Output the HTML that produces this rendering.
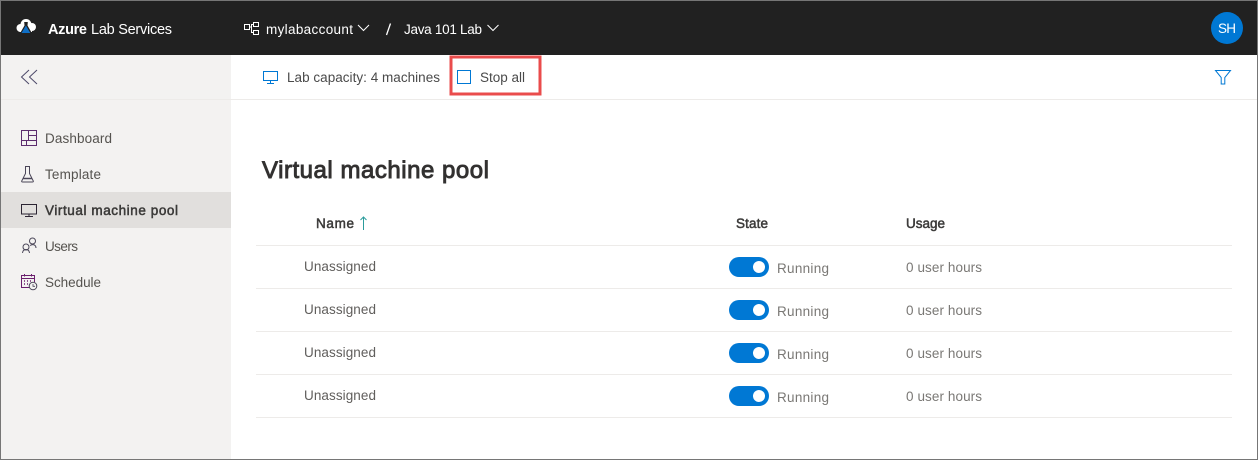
<!DOCTYPE html>
<html>
<head>
<meta charset="utf-8">
<style>
html,body{margin:0;padding:0;width:1258px;height:460px;overflow:hidden;background:#fff}
svg{display:block}
text{font-family:"Liberation Sans",sans-serif}
.semi{stroke:#3b3a39;stroke-width:.5px}
</style>
</head>
<body>
<svg width="1258" height="460" viewBox="0 0 1258 460" xmlns="http://www.w3.org/2000/svg">
<rect width="1258" height="460" fill="#fff"/>
<rect x="1" y="1" width="230" height="458" fill="#f3f2f1"/>
<rect x="1" y="192" width="230" height="36" fill="#e1dfdd"/>
<rect x="1" y="1" width="1256" height="54" fill="#212121"/>
<rect x="1" y="99" width="230" height="1" fill="#edebe9"/>
<rect x="231" y="99" width="1026" height="1" fill="#edebe9"/>

<!-- logo -->
<g>
<circle cx="20.500" cy="28" r="4" fill="#fff"/>
<circle cx="26" cy="24.500" r="5.500" fill="#fff"/>
<circle cx="32" cy="27" r="4" fill="#fff"/>
<rect x="20" y="27" width="12" height="5" fill="#fff"/>
<path d="M24.200 22h3.600l-.3 3.500 4.300 7.500h-11.600l4.300-7.500z" fill="#212121"/>
<path d="M25.900 25.500l4.400 7.500h-8.800z" fill="#0f6fc6"/>
</g>
<text x="48" y="34" font-size="14.500" font-weight="700" fill="#fff" textLength="39" lengthAdjust="spacing">Azure</text>
<text x="91" y="34" font-size="14.500" fill="#fff" textLength="81" lengthAdjust="spacing">Lab Services</text>

<!-- breadcrumb -->
<g fill="none" stroke="#fff" stroke-width="1">
<rect x="244.500" y="24.500" width="5" height="5"/>
<rect x="253.500" y="22.500" width="5" height="4"/>
<rect x="253.500" y="30.500" width="5" height="4"/>
<path d="M249.500 27h2v-2.500h2M251.500 27v5.500h2"/>
<path d="M358 25l5.500 5.500 5.500-5.500"/>
<path d="M487.500 25l5.500 5.500 5.500-5.500"/>
</g>
<text x="266" y="34" font-size="13.500" fill="#fff" textLength="87" lengthAdjust="spacing">mylabaccount</text>
<path d="M386.500 35l4-11.500" stroke="#fff" stroke-width="1.300" fill="none"/>
<text x="404" y="34" font-size="13.500" fill="#fff" textLength="78" lengthAdjust="spacing">Java 101 Lab</text>

<circle cx="1227" cy="28" r="16" fill="#0078d4"/>
<text x="1218" y="33" font-size="13.500" fill="#fff" textLength="18" lengthAdjust="spacing">SH</text>

<!-- collapse -->
<path d="M29 70l-7.500 7 7.500 7M37 70l-7.500 7 7.500 7" fill="none" stroke="#4d4a6a" stroke-width="1"/>

<!-- toolbar -->
<g fill="none" stroke="#0078d4" stroke-width="1">
<rect x="263.500" y="71.500" width="14" height="9"/>
<path d="M270.500 81v2M267 83.500h7"/>
<rect x="457.500" y="70.500" width="13" height="13"/>
<path d="M1215.500 70.500h15l-5.700 7v6.500h-3.600v-6.500z"/>
</g>
<text x="287" y="82" font-size="13.500" fill="#4a4a4a" textLength="153" lengthAdjust="spacing">Lab capacity: 4 machines</text>
<text x="480" y="82" font-size="13.500" fill="#4a4a4a" textLength="45" lengthAdjust="spacing">Stop all</text>
<rect x="451" y="57" width="89" height="37" fill="none" stroke="#ea4c4c" stroke-width="3"/>

<!-- nav icons -->
<g fill="none" stroke="#5c2d6e" stroke-width="1">
<rect x="21.500" y="130.500" width="15" height="15"/>
<path d="M21.500 140.500h15M28.500 130.500v10M28.500 135.500h8M26.500 140.500v5"/>
</g>
<g fill="none" stroke="#4a4658" stroke-width="1">
<path d="M25 166.500h5M25.500 166.500v7l-3.800 7.500q-.3 1 1 1h9.600q1.300 0 1-1l-3.800-7.500v-7"/>
<path d="M23 178.500h9" stroke-width="1.500"/>
</g>
<g fill="none" stroke="#2b2433" stroke-width="1">
<rect x="21.500" y="204.500" width="15" height="9.500"/>
<path d="M29 214v2M25 216.500h8"/>
</g>
<g fill="none" stroke="#4a4658" stroke-width="1">
<circle cx="32.500" cy="241" r="3"/>
<circle cx="26" cy="247" r="3"/>
<path d="M22.500 253q.3-3.500 3.500-3.500t3.500 3.500M30 245.500q2.500-1.500 4.500-.5 1.500 1 1.500 3"/>
</g>
<g fill="none" stroke="#6b1f6e" stroke-width="1">
<path d="M30 287.500h-8.500v-12h13v6.500M21.500 278.500h13M24.500 274v2.500M31.500 274v2.500"/>
<path d="M24 281h1M27 281h1M30 281h1M24 284h1M27 284h1" stroke-width="1.500"/>
</g>
<circle cx="33" cy="286" r="3.800" fill="#f3f2f1" stroke="#4a4658"/>
<path d="M33 284v2.300h2" fill="none" stroke="#4a4658" stroke-width=".8"/>

<!-- nav text -->
<text x="45" y="143" font-size="13.500" fill="#55534f" textLength="67" lengthAdjust="spacing">Dashboard</text>
<text x="45" y="179" font-size="13.500" fill="#55534f" textLength="56" lengthAdjust="spacing">Template</text>
<text class="semi" x="45" y="215" font-size="13.500" fill="#3b3a39" textLength="133" lengthAdjust="spacing">Virtual machine pool</text>
<text x="45" y="251" font-size="13.500" fill="#55534f" textLength="33" lengthAdjust="spacing">Users</text>
<text x="45" y="287" font-size="13.500" fill="#55534f" textLength="56" lengthAdjust="spacing">Schedule</text>

<!-- main -->
<text x="262" y="178" font-size="24" fill="#323130" class="semi" style="stroke:#323130;stroke-width:.9px" textLength="227" lengthAdjust="spacing">Virtual machine pool</text>

<text class="semi" x="316" y="228" font-size="13.500" fill="#3b3a39" textLength="38" lengthAdjust="spacing">Name</text>
<path d="M363.500 230v-13M360.500 220l3-3 3 3" fill="none" stroke="#2b9c9c" stroke-width="1"/>
<text class="semi" x="736" y="228" font-size="13.500" fill="#3b3a39" textLength="32" lengthAdjust="spacing">State</text>
<text class="semi" x="906" y="228" font-size="13.500" fill="#3b3a39" textLength="39" lengthAdjust="spacing">Usage</text>

<g fill="#edebe9">
<rect x="256" y="245" width="976" height="1"/>
<rect x="256" y="288" width="976" height="1"/>
<rect x="256" y="331" width="976" height="1"/>
<rect x="256" y="374" width="976" height="1"/>
<rect x="256" y="417" width="976" height="1"/>
</g>

<g id="rows">
<text x="304" y="271" font-size="13.500" fill="#605e5c" textLength="72" lengthAdjust="spacing">Unassigned</text>
<rect x="729" y="257" width="40" height="20" rx="10" fill="#0078d4"/>
<circle cx="759" cy="267" r="6" fill="#fff"/>
<text x="777" y="273" font-size="13.500" fill="#7a7875" textLength="52" lengthAdjust="spacing">Running</text>
<text x="906" y="272" font-size="13.500" fill="#7a7875" textLength="76" lengthAdjust="spacing">0 user hours</text>

<text x="304" y="314" font-size="13.500" fill="#605e5c" textLength="72" lengthAdjust="spacing">Unassigned</text>
<rect x="729" y="300" width="40" height="20" rx="10" fill="#0078d4"/>
<circle cx="759" cy="310" r="6" fill="#fff"/>
<text x="777" y="316" font-size="13.500" fill="#7a7875" textLength="52" lengthAdjust="spacing">Running</text>
<text x="906" y="315" font-size="13.500" fill="#7a7875" textLength="76" lengthAdjust="spacing">0 user hours</text>

<text x="304" y="357" font-size="13.500" fill="#605e5c" textLength="72" lengthAdjust="spacing">Unassigned</text>
<rect x="729" y="343" width="40" height="20" rx="10" fill="#0078d4"/>
<circle cx="759" cy="353" r="6" fill="#fff"/>
<text x="777" y="359" font-size="13.500" fill="#7a7875" textLength="52" lengthAdjust="spacing">Running</text>
<text x="906" y="358" font-size="13.500" fill="#7a7875" textLength="76" lengthAdjust="spacing">0 user hours</text>

<text x="304" y="400" font-size="13.500" fill="#605e5c" textLength="72" lengthAdjust="spacing">Unassigned</text>
<rect x="729" y="386" width="40" height="20" rx="10" fill="#0078d4"/>
<circle cx="759" cy="396" r="6" fill="#fff"/>
<text x="777" y="402" font-size="13.500" fill="#7a7875" textLength="52" lengthAdjust="spacing">Running</text>
<text x="906" y="401" font-size="13.500" fill="#7a7875" textLength="76" lengthAdjust="spacing">0 user hours</text>
</g>

<!-- outer border -->
<rect x=".5" y=".5" width="1257" height="459" fill="none" stroke="#767676" stroke-width="1"/>
</svg>
</body>
</html>
